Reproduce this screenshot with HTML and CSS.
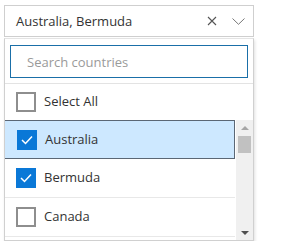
FILE: index.html
```html
<!DOCTYPE html>
<html lang="en">
<head>
    <meta charset="UTF-8">
    <title>Country Picker</title>
    <link rel="stylesheet" href="styles.css">
</head>
<body>
    <div class="picker">
        <div class="combo">
            <span class="combo-text">Australia, Bermuda</span>
            <span class="combo-clear">
                <svg width="10" height="10" viewBox="0 0 10 10"><path d="M1 1L9 9M9 1L1 9" stroke="#555" stroke-width="1.1" fill="none"/></svg>
            </span>
            <span class="combo-arrow">
                <svg width="13" height="7" viewBox="0 0 13 7"><path d="M0.5 0.5L6.5 6.3L12.5 0.5" stroke="#777" stroke-width="1" fill="none"/></svg>
            </span>
        </div>
        <div class="popup">
            <div class="search-wrap">
                <div class="search">Search countries</div>
            </div>
            <div class="row select-all">
                <span class="check"></span>
                <span class="label">Select All</span>
            </div>
            <div class="list-area">
                <div class="list">
                    <div class="row item focused">
                        <span class="check checked">
                            <svg width="12" height="10" viewBox="0 0 12 10"><path d="M1 5L4.5 8.5L11 1.5" stroke="#fff" stroke-width="1.5" fill="none"/></svg>
                        </span>
                        <span class="label">Australia</span>
                    </div>
                    <div class="row item">
                        <span class="check checked">
                            <svg width="12" height="10" viewBox="0 0 12 10"><path d="M1 5L4.5 8.5L11 1.5" stroke="#fff" stroke-width="1.5" fill="none"/></svg>
                        </span>
                        <span class="label">Bermuda</span>
                    </div>
                    <div class="row item">
                        <span class="check"></span>
                        <span class="label">Canada</span>
                    </div>
                </div>
                <div class="scrollbar">
                    <span class="arrow up"></span>
                    <div class="track">
                        <div class="thumb"></div>
                    </div>
                    <span class="arrow down"></span>
                </div>
            </div>
        </div>
    </div>
</body>
</html>
```

FILE: styles.css
```css
body
{
    margin: 0;
    padding: 5px 0 0 4px;
    background-color: #fff;
    font-family: "Open Sans", "Noto Sans", sans-serif;
    font-size: 13px;
    color: #333;
}
.picker
{
    width: 250px;
}
.combo
{
    display: flex;
    align-items: center;
    height: 32px;
    box-sizing: border-box;
    border: 1px solid #cfcfcf;
    padding: 0 0 0 11px;
    background-color: #fff;
}
.combo-text
{
    flex: 1;
    white-space: nowrap;
}
.combo-clear
{
    display: flex;
    width: 10px;
    margin-right: 15px;
}
.combo-arrow
{
    display: flex;
    width: 13px;
    margin-right: 8px;
}
.popup
{
    margin-top: 1px;
    height: 203px;
    box-sizing: border-box;
    border: 1px solid #d0d0d0;
    border-top-color: #e4e4e4;
    background-color: #fff;
    box-shadow: 1px 2px 3px rgba(0, 0, 0, 0.12);
    overflow: hidden;
}
.search-wrap
{
    padding: 6px 5px 5px 5px;
    border-bottom: 1px solid #e3e3e3;
}
.search
{
    height: 33px;
    box-sizing: border-box;
    border: 1px solid #1a6fa8;
    padding: 0 16px;
    display: flex;
    align-items: center;
    color: #9a9a9a;
}
.row
{
    display: flex;
    align-items: center;
    box-sizing: border-box;
    padding-left: 11px;
}
.label
{
    margin-top: -2px;
}
.select-all
{
    height: 36px;
}
.check
{
    width: 20px;
    height: 20px;
    box-sizing: border-box;
    border: 2px solid #8e8e8e;
    margin-right: 8px;
    display: flex;
    align-items: center;
    justify-content: center;
}
.check.checked
{
    border: none;
    background-color: #0a78d7;
}
.list-area
{
    display: flex;
    height: 120px;
}
.list
{
    flex: 1;
    margin-left: -1px;
}
.item
{
    height: 39px;
    border-bottom: 1px solid #e8e8e8;
    padding-left: 12px;
}
.item.focused
{
    background-color: #cde8ff;
    border: 1px solid #5b6775;
}
.scrollbar
{
    width: 17px;
    margin-left: 1px;
    background-color: #f0f0f0;
    display: flex;
    flex-direction: column;
    align-items: center;
}
.arrow
{
    width: 0;
    height: 0;
    border-left: 4px solid transparent;
    border-right: 4px solid transparent;
    margin: 6px 0 5px;
}
.arrow.up
{
    border-bottom: 4px solid #a6a6a6;
}
.arrow.down
{
    border-top: 4px solid #505050;
}
.track
{
    flex: 1;
    align-self: stretch;
    padding: 1px 2px 0;
}
.thumb
{
    height: 17px;
    background-color: #c1c1c1;
}
```
